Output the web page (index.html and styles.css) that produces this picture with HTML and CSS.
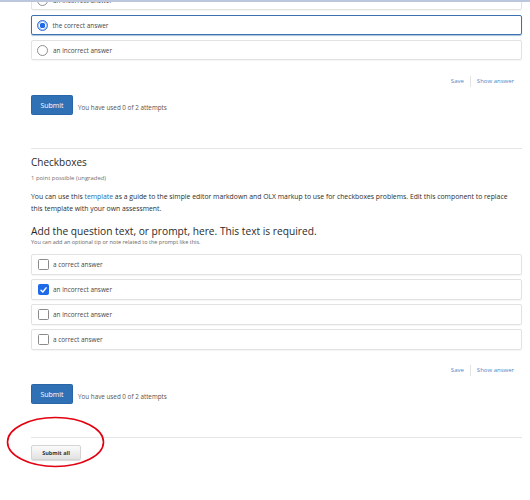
FILE: index.html
```html
<!DOCTYPE html>
<html>
<head>
<meta charset="utf-8">
<link rel="stylesheet" href="styles.css">
</head>
<body>
<div class="topline"></div>
<div class="page">
  <div class="options radios">
    <div class="option"><span class="radio"></span><span class="label">an incorrect answer</span></div>
    <div class="option selected"><span class="radio on"></span><span class="label">the correct answer</span></div>
    <div class="option"><span class="radio"></span><span class="label">an incorrect answer</span></div>
  </div>
  <div class="actions"><a class="act">Save</a><span class="sep"></span><a class="act">Show answer</a></div>
  <div class="submit-row"><button class="submit">Submit</button><span class="attempts">You have used 0 of 2 attempts</span></div>
  <hr class="rule rule1">
  <h2 class="title">Checkboxes</h2>
  <div class="points">1 point possible (ungraded)</div>
  <p class="desc">You can use this <a class="link">template</a> as a guide to the simple editor markdown and OLX markup to use for checkboxes problems. Edit this component to replace this template with your own assessment.</p>
  <h3 class="prompt">Add the question text, or prompt, here. This text is required.</h3>
  <div class="tip">You can add an optional tip or note related to the prompt like this.</div>
  <div class="options checks">
    <div class="option tall"><span class="check"></span><span class="label">a correct answer</span></div>
    <div class="option tall"><span class="check on"><svg viewBox="0 0 10 10" width="10" height="10"><path d="M2.2 5.2 L4.2 7.2 L7.9 2.6" fill="none" stroke="#fff" stroke-width="1.6" stroke-linecap="round" stroke-linejoin="round"/></svg></span><span class="label">an incorrect answer</span></div>
    <div class="option tall"><span class="check"></span><span class="label">an incorrect answer</span></div>
    <div class="option tall"><span class="check"></span><span class="label">a correct answer</span></div>
  </div>
  <div class="actions actions2"><a class="act">Save</a><span class="sep"></span><a class="act">Show answer</a></div>
  <div class="submit-row"><button class="submit">Submit</button><span class="attempts">You have used 0 of 2 attempts</span></div>
  <hr class="rule rule2">
  <button class="submit-all">Submit all</button>
</div>
<svg class="circle" width="110" height="60" viewBox="0 0 110 60"><ellipse cx="55.5" cy="29" rx="48" ry="24.5" fill="none" stroke="#e3000f" stroke-width="1.6"/></svg>
</body>
</html>
```
FILE: styles.css
```css
html, body {
  margin: 0;
  padding: 0;
  background: #fff;
  font-family: "Open Sans", "DejaVu Sans", sans-serif;
  color: #313131;
  overflow: hidden;
  height: 500px;
}
.topline {
  position: fixed;
  top: 0;
  left: 0;
  right: 0;
  height: 1.5px;
  background: #bcc6dc;
  z-index: 2;
}
.page {
  position: relative;
  margin-left: 31px;
  width: 491px;
}
.options {
  display: flex;
  flex-direction: column;
  gap: 5px;
}
.radios {
  margin-top: -10px;
}
.checks {
  margin-top: 8px;
  gap: 4px;
}
.option {
  box-sizing: border-box;
  height: 20px;
  border: 1px solid #e2e2e2;
  border-radius: 2px;
  box-shadow: 0 1px 1px rgba(0,0,0,0.04);
  display: flex;
  align-items: center;
  padding-left: 5px;
  font-size: 6.4px;
  color: #474747;
}
.option.tall {
  height: 21px;
}
.option.selected {
  border: 1.5px solid #3c72ad;
  box-shadow: 0 1px 1px rgba(60,114,173,0.45);
  padding-left: 4.5px;
}
.label {
  margin-left: 5px;
}
.radio {
  box-sizing: border-box;
  width: 11px;
  height: 11px;
  border-radius: 50%;
  border: 1px solid #8e8e8e;
  background: #fff;
  flex: none;
}
.radio.on {
  border: 1px solid #2a6fe0;
  background: radial-gradient(circle, #1f6ae8 0 2.6px, #fff 3px 3.4px, #b4cdf6 3.6px);
}
.check {
  box-sizing: border-box;
  width: 11px;
  height: 11px;
  border-radius: 1.5px;
  border: 1px solid #8a8a8a;
  background: #fff;
  flex: none;
  display: flex;
  align-items: center;
  justify-content: center;
  margin-left: 1px;
}
.check.on {
  background: #1f6ae8;
  border-color: #1f6ae8;
}
.check svg {
  display: block;
}
.check + .label {
  margin-left: 4px;
}
.actions {
  margin-top: 15px;
  height: 12px;
  display: flex;
  justify-content: flex-end;
  align-items: center;
  font-size: 6px;
  color: #4e87c6;
  padding-right: 8px;
}
.actions2 {
  margin-top: 14px;
}
.sep {
  width: 1px;
  height: 11px;
  background: #e3e3e3;
  margin: 0 6px;
}
.submit-row {
  margin-top: 8px;
  display: flex;
  align-items: center;
  height: 20px;
}
.submit {
  box-sizing: border-box;
  width: 42px;
  height: 20px;
  background: #2f71b4;
  border: 1px solid #2866a7;
  border-radius: 1.5px;
  color: #fff;
  font-family: "Open Sans", sans-serif;
  font-size: 7px;
  padding: 0;
  margin: 0;
}
.attempts {
  margin-left: 5px;
  font-size: 6.3px;
  color: #555;
  margin-top: 4px;
}
.rule {
  border: 0;
  height: 1px;
  background: #e6e6e6;
  margin: 33px 0 0 0;
}
.title {
  margin: 6px 0 0 0;
  font-size: 10px;
  line-height: 14px;
  font-weight: 400;
  color: #2a2a2a;
}
.points {
  margin-top: 4px;
  font-size: 5.9px;
  line-height: 10px;
  color: #707070;
}
.desc {
  margin: 8px 0 0 0;
  font-size: 6.85px;
  line-height: 12px;
  color: #2e2e2e;
  padding-right: 6px;
}
.link {
  color: #2a69ae;
}
.prompt {
  margin: 9px 0 0 0;
  font-size: 10.2px;
  line-height: 14px;
  font-weight: 400;
  color: #2a2a2a;
}
.tip {
  font-size: 5.5px;
  line-height: 8px;
  color: #666;
  margin-top: 0;
}
.submit-all {
  display: block;
  margin-top: 7px;
  box-sizing: border-box;
  width: 50px;
  height: 15px;
  padding: 0;
  border: 1px solid #d4d4d4;
  border-radius: 2px;
  background: linear-gradient(#fbfbfb, #e2e2e2);
  box-shadow: 0 1px 1px rgba(0,0,0,0.15);
  font-family: "Open Sans", sans-serif;
  font-weight: 700;
  font-size: 5.5px;
  color: #333;
}
.circle {
  position: absolute;
  left: 0;
  top: 413px;
}
```
